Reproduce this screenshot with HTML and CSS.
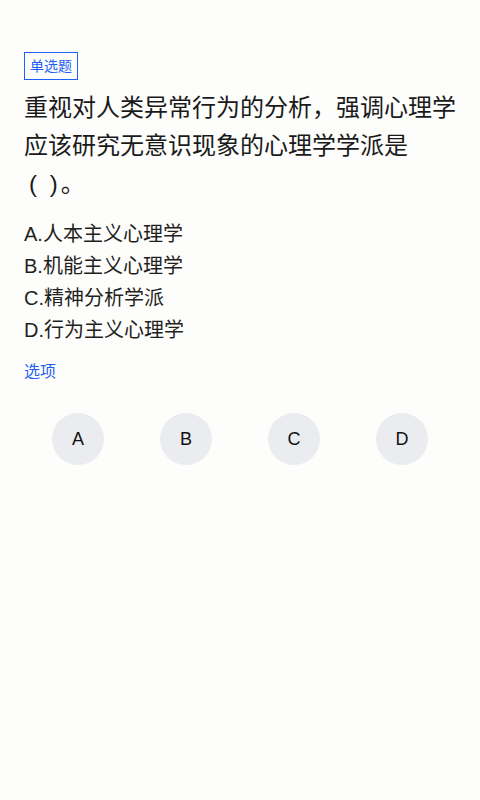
FILE: index.html
```html
<!DOCTYPE html>
<html lang="zh-CN">
<head>
<meta charset="utf-8">
<title>单选题</title>
<link rel="stylesheet" href="styles.css">
</head>
<body>
<main class="page">
  <div class="tag-row"><span class="tag">单选题</span></div>
  <p class="question">重视对人类异常行为的分析，强调心理学应该研究无意识现象的心理学学派是<span class="tail"><span class="paren">( )</span>。</span></p>
  <ul class="options">
    <li>A.人本主义心理学</li>
    <li>B.机能主义心理学</li>
    <li>C.精神分析学派</li>
    <li>D.行为主义心理学</li>
  </ul>
  <div class="label">选项</div>
  <div class="choices">
    <div class="choice-cell"><span class="choice">A</span></div>
    <div class="choice-cell"><span class="choice">B</span></div>
    <div class="choice-cell"><span class="choice">C</span></div>
    <div class="choice-cell"><span class="choice">D</span></div>
  </div>
</main>
</body>
</html>
```

FILE: styles.css
```css
html, body {
  margin: 0;
  padding: 0;
  background: #fdfdfb;
}
body {
  font-family: "Liberation Sans", "Noto Sans CJK SC", sans-serif;
  color: #1c1c1e;
}
.page {
  padding: 52px 24px 0;
  display: flex;
  flex-direction: column;
}
.tag-row {
  display: flex;
}
.tag {
  border: 1.5px solid #1f5ff5;
  color: #1f5ff5;
  font-size: 14px;
  line-height: 20px;
  padding: 3px 5px;
}
.question {
  margin: 9px 0 0;
  font-size: 24px;
  line-height: 38px;
  color: #1a1a1a;
}
.tail {
  white-space: nowrap;
  display: inline-block;
}
.paren {
  font-family: "Liberation Sans", sans-serif;
  margin-left: 5px;
  letter-spacing: 3px;
}
.options {
  list-style: none;
  margin: 15px 0 0;
  padding: 0;
  font-size: 20px;
  line-height: 32px;
  color: #1f1f22;
}
.label {
  margin-top: 14px;
  font-size: 16px;
  line-height: 24px;
  color: #1f5ff5;
}
.choices {
  margin-top: 29px;
  display: grid;
  grid-template-columns: repeat(4, 1fr);
}
.choice-cell {
  display: flex;
  justify-content: center;
}
.choice {
  width: 52px;
  height: 52px;
  border-radius: 50%;
  background: #ebecf0;
  display: flex;
  align-items: center;
  justify-content: center;
  font-size: 18px;
  color: #111;
}
```
